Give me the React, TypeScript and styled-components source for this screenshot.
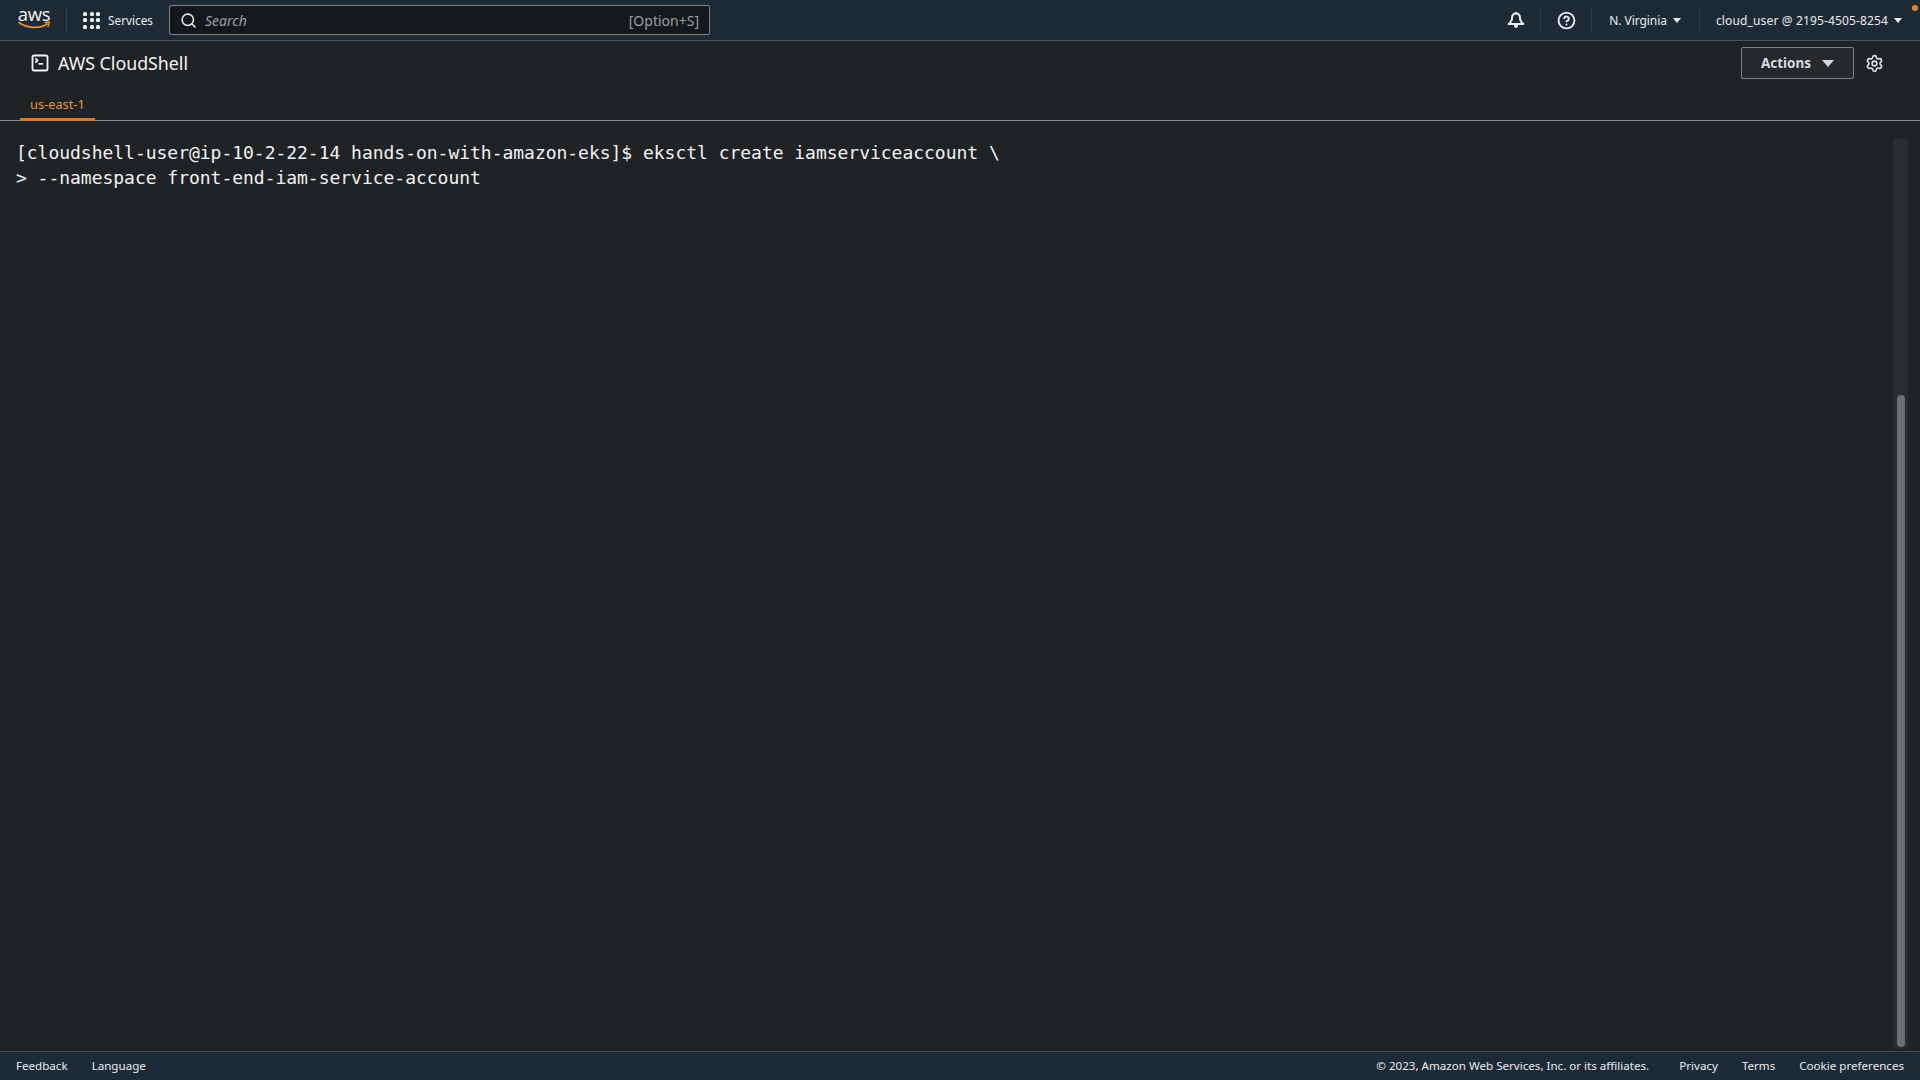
import React from 'react';
import styled, { createGlobalStyle } from 'styled-components';
import { Search, Settings, CircleHelp, SquareTerminal } from 'lucide-react';

const GlobalStyle = createGlobalStyle`
  html, body {
    margin: 0;
    padding: 0;
    height: 100%;
    overflow: hidden;
    background: #1f2326;
    font-family: "Noto Sans", "Open Sans", sans-serif;
  }
`;

const Page = styled.div`
  display: flex;
  flex-direction: column;
  height: 100vh;
`;

const TopNav = styled.header`
  display: flex;
  align-items: center;
  flex: 0 0 40px;
  height: 40px;
  background: #1f2a37;
  border-bottom: 1px solid #4a5562;
  color: #e9ebed;
  font-size: 12px;
  position: relative;
`;

const LogoWrap = styled.div`
  display: flex;
  flex-direction: column;
  align-items: center;
  width: 32px;
  margin-left: 18px;
  color: #f2f3f3;
`;

const LogoText = styled.span`
  font-family: "Open Sans", sans-serif;
  font-size: 18.5px;
  line-height: 15px;
  letter-spacing: -0.3px;
  margin-top: -5px;
`;

const Divider = styled.div`
  width: 1px;
  height: 24px;
  background: #343f4c;
  margin: ${(p: { $margin: string }) => p.$margin};
`;

const ServicesButton = styled.div`
  display: flex;
  align-items: center;
  gap: 8px;
  font-size: 11.8px;
`;

const GridIcon = styled.div`
  display: grid;
  grid-template-columns: repeat(3, 4px);
  grid-auto-rows: 4px;
  gap: 2.5px;
  & > i {
    background: #f2f3f3;
    border-radius: 1.5px;
  }
`;

const SearchBox = styled.div`
  display: flex;
  align-items: center;
  box-sizing: border-box;
  width: 541px;
  height: 30px;
  margin-left: 16px;
  padding: 0 10px 0 10px;
  background: #15181b;
  border: 1px solid #7d8791;
  border-radius: 2px;
  color: #95a0a8;
`;

const SearchText = styled.span`
  flex: 1;
  margin-left: 8px;
  font-size: 14px;
  font-style: italic;
`;

const Shortcut = styled.span`
  font-size: 14px;
`;

const NavRight = styled.div`
  display: flex;
  align-items: center;
  margin-left: auto;
  padding-right: 18px;
`;

const NavText = styled.span`
  display: flex;
  align-items: center;
  gap: 6px;
  white-space: nowrap;
  letter-spacing: ${(p: { $spacing: number }) => p.$spacing}px;
`;

const Caret = styled.i`
  display: block;
  width: 0;
  height: 0;
  border-left: ${(p: { $size: number }) => p.$size}px solid transparent;
  border-right: ${(p: { $size: number }) => p.$size}px solid transparent;
  border-top: ${(p: { $size: number }) => p.$size + 1}px solid currentColor;
`;

const StatusDot = styled.span`
  position: absolute;
  top: 5px;
  right: 2px;
  width: 6px;
  height: 6px;
  border-radius: 50%;
  background: #d9882b;
`;

const SubBar = styled.div`
  flex: 0 0 80px;
  box-sizing: border-box;
  display: flex;
  flex-direction: column;
  border-bottom: 1px solid #8a8f93;
`;

const TitleRow = styled.div`
  display: flex;
  align-items: center;
  height: 44px;
  padding: 0 36px 0 30px;
  color: #f2f3f3;
`;

const Title = styled.h1`
  margin: 0 0 0 8px;
  font-size: 17.8px;
  font-weight: 400;
`;

const ActionsButton = styled.button`
  display: flex;
  align-items: center;
  justify-content: center;
  gap: 11px;
  box-sizing: border-box;
  width: 113px;
  height: 32px;
  margin-left: auto;
  padding: 0;
  background: #25292c;
  border: 1px solid #7d8387;
  border-radius: 2px;
  color: #d5dadd;
  font-family: inherit;
  font-size: 13.5px;
  font-weight: 700;
`;

const SettingsSlot = styled.div`
  display: flex;
  margin-left: 11px;
  color: #e0e3e5;
`;

const TabRow = styled.div`
  display: flex;
  flex: 1;
  padding-left: 20px;
`;

const Tab = styled.div`
  display: flex;
  align-items: center;
  box-sizing: border-box;
  height: 36px;
  margin-bottom: -1px;
  padding: 4px 10px 0;
  border-bottom: 3px solid #d9792b;
  color: #e8923f;
  font-size: 12.8px;
`;

const TerminalArea = styled.main`
  flex: 1;
  display: flex;
  min-height: 0;
  background: #1f2326;
`;

const TerminalText = styled.pre`
  flex: 1;
  margin: 0;
  padding: 19px 0 0 16px;
  color: #f2f2f2;
  font-family: "DejaVu Sans Mono", monospace;
  font-size: 18px;
  line-height: 25px;
  letter-spacing: -0.027px;
`;

const ScrollTrack = styled.div`
  display: flex;
  flex-direction: column;
  justify-content: flex-end;
  align-items: center;
  box-sizing: border-box;
  width: 15px;
  margin: 18px 12px 2px 0;
  padding-bottom: 2px;
  background: #282d30;
`;

const ScrollThumb = styled.div`
  width: 8px;
  height: 652px;
  border-radius: 4px;
  background: #6c7073;
`;

const Footer = styled.footer`
  display: flex;
  align-items: center;
  flex: 0 0 28px;
  box-sizing: content-box;
  padding: 0 16px;
  background: #1f2a37;
  border-top: 1px solid #424b54;
  color: #e9ebed;
  font-size: 11.6px;
`;

const FooterGroup = styled.div`
  display: flex;
  gap: ${(p: { $gap: number }) => p.$gap}px;
  margin-top: -2px;
`;

const FooterRight = styled(FooterGroup)`
  margin-left: auto;
`;

const Copyright = styled.span`
  margin-right: 6px;
`;

const BellIcon = () => (
  <svg width="18" height="18" viewBox="0 0 18 18" fill="none" stroke="currentColor" strokeWidth="2" strokeLinejoin="round">
    <path d="M9 1v1.6" />
    <path d="M9 2.6c-2.7 0-4 2.1-4 4.6 0 2.6-1.6 4.3-3.4 5.8h14.8c-1.8-1.5-3.4-3.2-3.4-5.8 0-2.5-1.3-4.6-4-4.6z" />
    <circle cx="9" cy="15" r="1.5" fill="currentColor" strokeWidth="1" />
  </svg>
);

export default function App() {
  return (
    <>
      <GlobalStyle />
      <Page>
        <TopNav>
          <LogoWrap>
            <LogoText>aws</LogoText>
            <svg width="33" height="9" viewBox="0 0 33 9" fill="none">
              <path d="M1 1.5 C9 7.5 22 8 29 3" stroke="#e8912d" strokeWidth="1.8" strokeLinecap="round" />
              <path d="M27 1.5 L31.5 1 L30 5.5" stroke="#e8912d" strokeWidth="1.4" strokeLinecap="round" strokeLinejoin="round" />
            </svg>
          </LogoWrap>
          <Divider $margin="0 16px 0 16px" />
          <ServicesButton>
            <GridIcon>
              {Array.from({ length: 9 }, (_, i) => <i key={i} />)}
            </GridIcon>
            <span>Services</span>
          </ServicesButton>
          <SearchBox>
            <Search size={17} color="#e9ebed" strokeWidth={2.2} />
            <SearchText>Search</SearchText>
            <Shortcut>[Option+S]</Shortcut>
          </SearchBox>
          <NavRight>
            <BellIcon />
            <Divider $margin="0 16px 0 15px" />
            <CircleHelp size={19} strokeWidth={2.4} />
            <Divider $margin="0 17px 0 15px" />
            <NavText $spacing={-0.05}>N. Virginia <Caret $size={4.5} /></NavText>
            <Divider $margin="0 16px 0 18px" />
            <NavText $spacing={0.14}>cloud_user @ 2195-4505-8254 <Caret $size={4.5} /></NavText>
          </NavRight>
          <StatusDot />
        </TopNav>
        <SubBar>
          <TitleRow>
            <SquareTerminal size={20} strokeWidth={2.2} />
            <Title>AWS CloudShell</Title>
            <ActionsButton>Actions <Caret $size={6.5} /></ActionsButton>
            <SettingsSlot><Settings size={19} strokeWidth={2} /></SettingsSlot>
          </TitleRow>
          <TabRow>
            <Tab>us-east-1</Tab>
          </TabRow>
        </SubBar>
        <TerminalArea>
          <TerminalText>{`[cloudshell-user@ip-10-2-22-14 hands-on-with-amazon-eks]$ eksctl create iamserviceaccount \\
> --namespace front-end-iam-service-account`}</TerminalText>
          <ScrollTrack>
            <ScrollThumb />
          </ScrollTrack>
        </TerminalArea>
        <Footer>
          <FooterGroup $gap={24}>
            <span>Feedback</span>
            <span>Language</span>
          </FooterGroup>
          <FooterRight $gap={24}>
            <Copyright>© 2023, Amazon Web Services, Inc. or its affiliates.</Copyright>
            <span>Privacy</span>
            <span>Terms</span>
            <span>Cookie preferences</span>
          </FooterRight>
        </Footer>
      </Page>
    </>
  );
}
